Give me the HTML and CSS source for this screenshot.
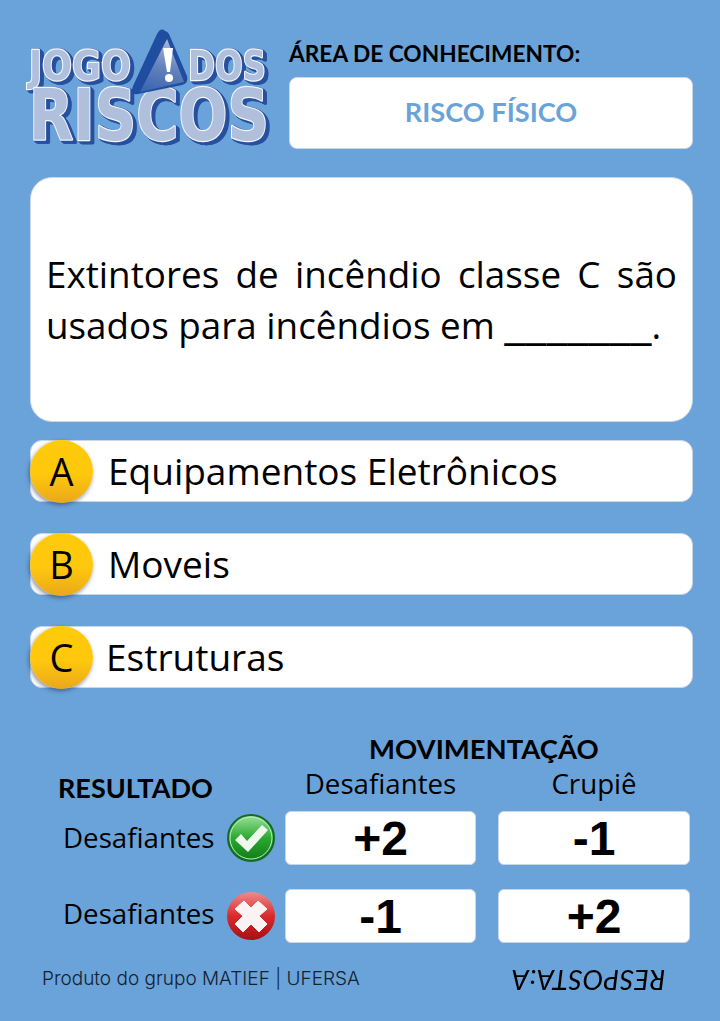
FILE: index.html
```html
<!DOCTYPE html>
<html lang="pt">
<head>
<meta charset="utf-8">
<title>Jogo dos Riscos</title>
<link rel="stylesheet" href="styles.css">
</head>
<body>
<main class="card">
  <header class="top">
    <svg class="logo" viewBox="0 0 250 125" width="250" height="125" role="img" aria-label="Jogo dos Riscos">
      <defs>
        <linearGradient id="tri" x1="0.6" y1="0" x2="0.4" y2="1">
          <stop offset="0" stop-color="#a9b9d8"/>
          <stop offset="0.5" stop-color="#6684bf"/>
          <stop offset="1" stop-color="#3d66b0"/>
        </linearGradient>
      </defs>
      <g class="logo-word">
        <text x="3" y="54" class="logo-small" textLength="102" lengthAdjust="spacingAndGlyphs">JOGO</text>
        <text x="162" y="54" class="logo-small" textLength="78" lengthAdjust="spacingAndGlyphs">DOS</text>
        <text x="3" y="114" class="logo-big" textLength="240" lengthAdjust="spacingAndGlyphs">RISCOS</text>
      </g>
      <path class="tri-back" d="M139 5 Q135 1 131 8 L107 60 Q103 70 112 68 L156 59 Q163 57 161 50 L143 8 Q141 5 139 5 Z"/>
      <path class="tri-front" d="M141 13 L114 66 L158 56 Z" fill="url(#tri)"/>
      <path class="bang" d="M137 22 L147 22 L144 46 L141 46 Z"/>
      <circle class="bang" cx="143" cy="52" r="4"/>
    </svg>
    <div class="area">
      <h2 class="area-label">ÁREA DE CONHECIMENTO:</h2>
      <div class="area-box">RISCO FÍSICO</div>
    </div>
  </header>

  <section class="question">
    <p>Extintores de incêndio classe C são usados para incêndios em <span class="blank">_______</span>.</p>
  </section>

  <ol class="options">
    <li class="option">
      <span class="badge">A</span>
      <span class="option-text">Equipamentos Eletrônicos</span>
    </li>
    <li class="option">
      <span class="badge">B</span>
      <span class="option-text">Moveis</span>
    </li>
    <li class="option">
      <span class="badge">C</span>
      <span class="option-text option-text-c">Estruturas</span>
    </li>
  </ol>

  <section class="moves">
    <h2 class="moves-title">MOVIMENTAÇÃO</h2>
    <div class="moves-grid">
      <div class="result-title">RESULTADO</div>
      <div class="col-title">Desafiantes</div>
      <div class="col-title col-title-right">Crupiê</div>

      <div class="row-label">
        <span>Desafiantes</span>
        <svg class="status" viewBox="0 0 50 50" width="50" height="50" aria-hidden="true">
          <defs>
            <linearGradient id="green" x1="0" y1="0" x2="0" y2="1">
              <stop offset="0" stop-color="#9be49c"/>
              <stop offset="0.5" stop-color="#2ca82f"/>
              <stop offset="1" stop-color="#0f7a18"/>
            </linearGradient>
          </defs>
          <circle cx="25" cy="25" r="23" fill="url(#green)" stroke="#156b26" stroke-width="2"/>
          <circle cx="25" cy="25" r="21" fill="none" stroke="#b8ecc0" stroke-width="1"/>
          <path d="M9 27 L15 21 L21 28 L36 12 L42 17 L22 39 Z" fill="#eef8ee"/>
        </svg>
      </div>
      <div class="value">+2</div>
      <div class="value value-right">-1</div>

      <div class="row-label second">
        <span>Desafiantes</span>
        <svg class="status" viewBox="0 0 50 50" width="50" height="50" aria-hidden="true">
          <defs>
            <linearGradient id="red" x1="0" y1="0" x2="0" y2="1">
              <stop offset="0" stop-color="#f08a8a"/>
              <stop offset="0.5" stop-color="#d92a2d"/>
              <stop offset="1" stop-color="#a80f14"/>
            </linearGradient>
          </defs>
          <circle cx="25" cy="25" r="24" fill="url(#red)"/>
          <path d="M18 10 L25 17 L32 10 L41 18 L33 25 L41 33 L33 41 L25 33 L17 41 L9 33 L17 25 L9 18 Z" fill="#fbf3f3" stroke="#fbf3f3" stroke-width="1" stroke-linejoin="round"/>
        </svg>
      </div>
      <div class="value second">-1</div>
      <div class="value value-right second">+2</div>
    </div>
  </section>

  <footer class="foot">
    <span class="credit">Produto do grupo MATIEF | UFERSA</span>
    <span class="answer">RESPOSTA:A</span>
  </footer>
</main>
</body>
</html>
```
FILE: styles.css
```css
* { box-sizing: border-box; }
html, body { margin: 0; padding: 0; }
body {
  width: 720px;
  height: 1021px;
  background: #6aa3d9;
  font-family: "Open Sans", sans-serif;
  color: #000;
  overflow: hidden;
}
.card { padding: 26px 27px 0 30px; }
.top { display: flex; align-items: flex-start; gap: 13px; margin-left: -4px; height: 151px; }
.logo { flex: none; overflow: visible; }
.logo text { font-family: "DejaVu Sans", sans-serif; font-weight: 700; }
.logo-small { font-size: 40px; }
.logo-big { font-size: 72px; }
.logo-word {
  fill: #b0bfdc;
  stroke: #f2f5fb;
  stroke-width: 2.4px;
  stroke-linejoin: round;
  paint-order: stroke;
  filter: drop-shadow(1px 1px 0 #27509f) drop-shadow(1px 1px 0 #27509f) drop-shadow(1px 1px 0 #27509f) drop-shadow(1px 0 0 #27509f);
}
.tri-back { fill: #1f4da0; }
.bang { fill: #fff; }
.area { flex: 1; display: flex; flex-direction: column; padding-top: 14px; }
.area-label { margin: 0 0 10px; font-family: "Lato", sans-serif; font-size: 22.7px; line-height: 27px; font-weight: 700; white-space: nowrap; }
.area-box {
  height: 72px;
  padding-bottom: 3px;
  display: flex; align-items: center; justify-content: center;
  background: #fff;
  border: 1px solid #c9d6e6;
  border-radius: 8px;
  color: #6aa3d9;
  font-family: "Lato", sans-serif;
  font-size: 27.2px;
  font-weight: 700;
}
.question {
  height: 245px;
  background: #fff;
  border: 1px solid #c9d6e6;
  border-radius: 22px;
  padding: 71px 15px 0;
}
.question p {
  margin: 0;
  font-size: 36.8px;
  line-height: 51px;
  text-align: justify;
}
.blank { font-size: 48px; line-height: 0; }
.options { list-style: none; margin: 18px 0 0; padding: 0; display: flex; flex-direction: column; gap: 31px; }
.option {
  height: 62px;
  display: flex;
  align-items: center;
  background: #fff;
  border: 1px solid #c9d6e6;
  border-radius: 12px;
}
.badge {
  flex: none;
  width: 63px; height: 63px;
  margin: 0 15px 0 -1px;
  border-radius: 50%;
  display: flex; align-items: center; justify-content: center;
  background: linear-gradient(#ffcb0a 0%, #ffc70d 55%, #e9a81c 100%);
  box-shadow: -1px 2px 4px rgba(30, 50, 90, .55);
  font-size: 38px;
}
.option-text { font-size: 37px; line-height: 40px; }
.option-text-c { margin-left: -2px; }
.moves { margin-top: 43px; }
.moves-title { margin: 0 0 -1px 339px; font-family: "Lato", sans-serif; font-size: 27.5px; line-height: 36px; font-weight: 700; }
.moves-grid {
  display: grid;
  grid-template-columns: 255px 191px 214px;
  grid-template-rows: 45px 54px 24px 54px;
}
.result-title { font-family: "Lato", sans-serif; font-size: 27px; line-height: 40px; font-weight: 700; padding-left: 28px; padding-top: 2px; white-space: nowrap; }
.col-title { font-size: 27.7px; line-height: 34px; text-align: center; }
.col-title-right { padding-left: 22px; }
.row-label { grid-column: 1; display: flex; align-items: center; justify-content: space-between; padding: 0 9px 0 33px; font-size: 27.7px; }
.row-label span { margin-bottom: 3px; }
.row-label.second span { margin-bottom: 6px; }
.second { grid-row: 4; }
.status { flex: none; }
.value {
  height: 54px;
  display: flex; align-items: center; justify-content: center;
  background: #fff;
  border: 1px solid #c9d6e6;
  border-radius: 6px;
  font-family: "Liberation Sans", sans-serif;
  font-weight: 700;
  font-size: 48px;
}
.value-right { margin-left: 22px; }
.foot { display: flex; justify-content: space-between; align-items: center; height: 34px; margin-top: 18px; padding: 0 28px 0 12px; }
.credit { font-family: "Inter", sans-serif; font-weight: 300; font-size: 19px; color: #14202e; white-space: nowrap; }
.answer { display: block; padding-bottom: 4px; transform: rotate(180deg); font-family: "Lato", sans-serif; font-style: italic; font-size: 27.5px; letter-spacing: .5px; }
```
